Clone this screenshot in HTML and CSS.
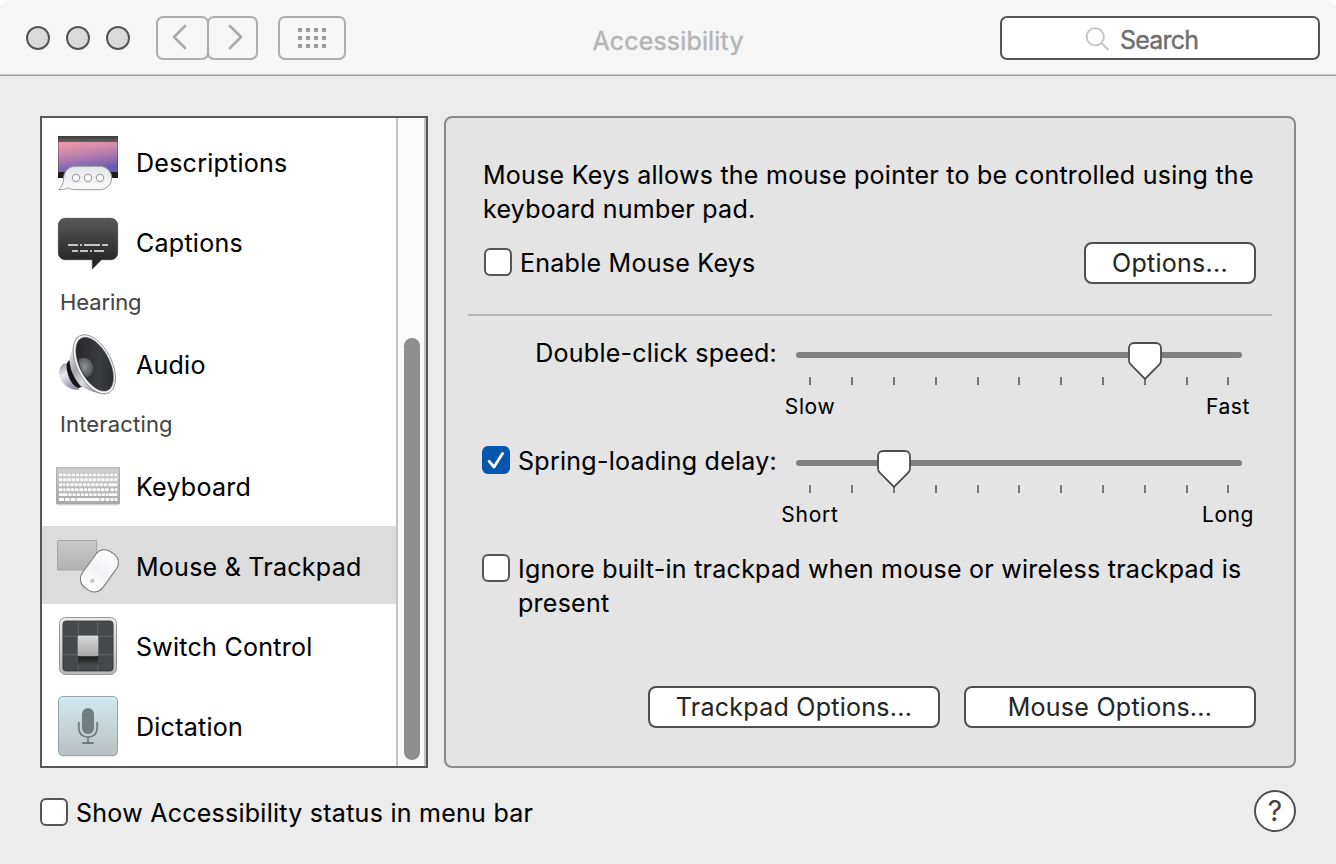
FILE: index.html
```html
<!DOCTYPE html>
<html lang="en">
<head>
<meta charset="utf-8">
<title>Accessibility</title>
<link rel="stylesheet" href="styles.css">
</head>
<body>
<div class="window">
  <header class="titlebar">
    <div class="lights"><i class="light"></i><i class="light"></i><i class="light"></i></div>
    <div class="nav">
      <button class="nav-btn nav-back" aria-label="Back"><svg width="20" height="28" viewBox="0 0 20 28"><path d="M15 3 4 14l11 11"/></svg></button>
      <button class="nav-btn nav-forward" aria-label="Forward"><svg width="20" height="28" viewBox="0 0 20 28"><path d="M5 3 16 14 5 25"/></svg></button>
    </div>
    <button class="nav-btn show-all" aria-label="Show All">
      <svg width="28" height="20" viewBox="0 0 28 20"><path d="M0 2h28M0 10h28M0 18h28"/></svg>
    </button>
    <h1 class="title">Accessibility</h1>
    <div class="search">
      <svg width="24" height="24" viewBox="0 0 24 24"><circle cx="9.300" cy="9.800" r="8.600"/><path d="M15.500 16l7 7"/></svg>
      <span>Search</span>
    </div>
  </header>

  <main class="content">
    <nav class="sidebar">
      <div class="list">
        <div class="row">
          <svg class="icon" viewBox="0 0 64 64">
            <defs>
              <linearGradient id="sky" x1="0" y1="0" x2=".3" y2="1"><stop offset="0" stop-color="#ee9aaa"/><stop offset=".3" stop-color="#d58dab"/><stop offset=".65" stop-color="#a676b0"/><stop offset="1" stop-color="#6a5cae"/></linearGradient>
              <linearGradient id="bar" x1="0" y1="0" x2="0" y2="1"><stop offset="0" stop-color="#3c3c3c"/><stop offset="1" stop-color="#626262"/></linearGradient>
              <linearGradient id="bub" x1="0" y1="0" x2="0" y2="1"><stop offset="0" stop-color="#e4e6e9"/><stop offset="1" stop-color="#fafafa"/></linearGradient>
            </defs>
            <path d="M2 6h60v42H2z" fill="#1c1c1c"/><path d="M2 6h60v6H2z" fill="url(#bar)"/><path d="M2.300 12h59.400v30H2.300z" fill="url(#sky)"/>
            <path d="M20 36.300h25.500a11.800 11.800 0 0 1 0 23.400H20c-3 0-6-.6-8-2-2.500 1.600-6 2.200-9.300 1.800C5.500 57.300 7.500 53.500 7.700 48 7.900 41 13 36.300 20 36.300z" fill="url(#bub)" stroke="#9599a0" stroke-width="1"/>
            <g fill="#fff" stroke="#a5a5a5" stroke-width="1.200"><circle cx="20" cy="48" r="3.600"/><circle cx="32" cy="48" r="3.600"/><circle cx="44" cy="48" r="3.600"/></g>
          </svg>
          <span>Descriptions</span>
        </div>
        <div class="row">
          <svg class="icon" viewBox="0 0 64 64">
            <defs><linearGradient id="cap" x1="0" y1="0" x2="0" y2="1"><stop offset="0" stop-color="#585858"/><stop offset=".8" stop-color="#292929"/><stop offset="1" stop-color="#1d1d1d"/></linearGradient></defs>
            <path d="M9 8.300h46a6.700 6.700 0 0 1 6.700 6.700v28a6.700 6.700 0 0 1-6.700 6.700h-9.500L36.300 59V49.700H9A6.700 6.700 0 0 1 2.300 43V15A6.700 6.700 0 0 1 9 8.300z" fill="url(#cap)" stroke="#333" stroke-width=".6"/>
            <path d="M12 35h10m2 0h2m2 0h16m2 0h6M16 41h6m2 0h8m2 0h2m2 0h10" stroke="#c4c4c4" stroke-width="2"/>
          </svg>
          <span>Captions</span>
        </div>
        <div class="group hearing">Hearing</div>
        <div class="row">
          <svg class="icon" viewBox="0 0 64 64">
            <defs>
              <linearGradient id="cone" x1="0" y1=".2" x2=".8" y2="1"><stop offset="0" stop-color="#eeeef2"/><stop offset=".35" stop-color="#a4a4aa"/><stop offset=".6" stop-color="#dcdce2"/><stop offset="1" stop-color="#77777d"/></linearGradient>
              <linearGradient id="back" x1="0" y1="0" x2=".5" y2="1"><stop offset="0" stop-color="#8b8b94"/><stop offset=".45" stop-color="#e9e9f2"/><stop offset="1" stop-color="#9292a0"/></linearGradient>
              <radialGradient id="ball" cx=".4" cy=".45" r=".65"><stop offset="0" stop-color="#8d9595"/><stop offset="1" stop-color="#484c4f"/></radialGradient>
              <linearGradient id="dish" x1="0" y1="0" x2="1" y2="1"><stop offset="0" stop-color="#202022"/><stop offset=".6" stop-color="#3b3c40"/><stop offset="1" stop-color="#252527"/></linearGradient>
            </defs>
            <path d="M13 31C5 30 3 36 3.300 42c.6 8 7.700 16 19.700 16z" fill="url(#back)"/>
            <path d="M14 28c-4.500 2-4 8-2 14.500 2.200 7 5.500 11.500 10.500 13.500l6-2z" fill="#161618"/>
            <path d="M20 3c-3 8-3.500 16-6.500 23 0 10 3.500 19 11 28 8 4 16 7.500 24.500 8.500z" fill="url(#cone)"/>
            <ellipse cx="38.300" cy="32.300" rx="17.300" ry="32" transform="rotate(-27 38.300 32.300)" fill="#f5f5f7" stroke="#8a8a90" stroke-width=".8"/>
            <ellipse cx="38.600" cy="32.200" rx="15" ry="29.200" transform="rotate(-27 38.600 32.200)" fill="url(#dish)" stroke="#555" stroke-width=".5"/>
            <path d="M22.500 27.500c7-4 14.500.5 14.800 8.500.1 5-3 9-7.300 9-3.500-4-6.500-10.500-7.500-17.500z" fill="url(#ball)"/>
          </svg>
          <span>Audio</span>
        </div>
        <div class="group">Interacting</div>
        <div class="row">
          <svg class="icon" viewBox="0 0 64 64">
            <defs><linearGradient id="kbd" x1="0" y1="0" x2="0" y2="1"><stop offset="0" stop-color="#d0d0d0"/><stop offset="1" stop-color="#a8a8a8"/></linearGradient></defs>
            <path d="M1 50h62v1.600H1z" fill="#ddd"/>
            <path d="M.400 13.700h63.200v36H.400z" fill="url(#kbd)" stroke="#999" stroke-width=".8"/>
            <g fill="none" stroke="#fafafa">
              <path d="M3 21h58.300" stroke-width="2.400" stroke-dasharray="3.200 1.036"/>
              <path d="M3 25.800h58.300" stroke-width="3" stroke-dasharray="3.400 .822"/>
              <path d="M3 30.800h6m1 0h45.500" stroke-width="3" stroke-dasharray="3.300 .9"/><path d="M55 30.800h6.300" stroke-width="3"/>
              <path d="M3 35.800h6.600M10.500 35.800h43M54.500 35.800h6.800" stroke-width="3" stroke-dasharray="3.500 .8"/>
              <path d="M3 40.700h8.500M52.500 40.700h8.800" stroke-width="2.800"/><path d="M12.400 40.700h39.500" stroke-width="2.800" stroke-dasharray="3.300 .85"/>
              <path d="M3 45.500h5m1 0h4.500m1 0h5m1 0h23m1 0h4m1 0h4m1 0h3m1 0h2.800" stroke-width="3"/>
            </g>
          </svg>
          <span>Keyboard</span>
        </div>
        <div class="row selected">
          <svg class="icon" viewBox="0 0 64 64">
            <defs>
              <linearGradient id="pad" x1="0" y1="0" x2="0" y2="1"><stop offset="0" stop-color="#c9c9c9"/><stop offset="1" stop-color="#b2b2b2"/></linearGradient>
              <linearGradient id="mou" x1="0" y1="0" x2="0" y2="1"><stop offset="0" stop-color="#fff"/><stop offset=".5" stop-color="#f2f2f4"/><stop offset="1" stop-color="#fff"/></linearGradient>
            </defs>
            <rect x="1.500" y="6.500" width="39.200" height="29.500" rx=".8" fill="url(#pad)" stroke="#a0a0a0" stroke-width=".9"/>
            <g transform="rotate(36 43.300 37)"><rect x="30.800" y="15.500" width="25" height="44" rx="10.500" fill="#bbb"/><rect x="30.700" y="14.700" width="25.200" height="44.200" rx="10.500" fill="url(#mou)" stroke="#7b7b7b" stroke-width="1"/></g>
            <path d="M37.300 45c1 .2 1.300 1 .8 2.300-.4 1.300-1.600 1.700-2.800 1.300-1-.4-1.200-1.400-.7-2.400.5-1 1.300-1.300 2.200-1.200z" fill="#c6c6ca" stroke="#c6c6ca" stroke-width=".5"/>
          </svg>
          <span>Mouse &amp; Trackpad</span>
        </div>
        <div class="row">
          <svg class="icon" viewBox="0 0 64 64">
            <defs>
              <linearGradient id="frm" x1="0" y1="0" x2="0" y2="1"><stop offset="0" stop-color="#ededed"/><stop offset="1" stop-color="#b9b9b9"/></linearGradient>
              <linearGradient id="sq" x1="0" y1="0" x2="0" y2="1"><stop offset="0" stop-color="#d8d8d8"/><stop offset="1" stop-color="#a9a9a9"/></linearGradient>
              <linearGradient id="shd" x1="0" y1="0" x2="0" y2="1"><stop offset="0" stop-color="#1b1b1c"/><stop offset="1" stop-color="#47484a"/></linearGradient>
            </defs>
            <rect x="3.500" y="3.500" width="57" height="57" rx="6" fill="url(#frm)" stroke="#969696"/>
            <rect x="6.900" y="6.900" width="50.200" height="50.200" rx="3" fill="#47484b" stroke="#303032" stroke-width=".7"/>
            <path d="M22.300 7v50M41.700 7v50M7 22.300h50M7 40.700h50" stroke="#6b6c6e" stroke-width=".8"/>
            <path d="M22 42h20.300v9H22z" fill="url(#shd)"/>
            <rect x="21.700" y="21.700" width="20.600" height="20.600" rx="1.300" fill="url(#sq)"/><path d="M22.500 22.300h19" stroke="#efefef" stroke-width=".8"/>
          </svg>
          <span>Switch Control</span>
        </div>
        <div class="row">
          <svg class="icon" viewBox="0 0 64 64">
            <defs><linearGradient id="dic" x1="0" y1="0" x2="0" y2="1"><stop offset="0" stop-color="#d1e9f1"/><stop offset="1" stop-color="#b9c0c1"/></linearGradient></defs>
            <rect x="2.500" y="3" width="59" height="59.500" rx="4.500" fill="#d5d5d5"/>
            <rect x="2.500" y="2.500" width="59" height="59" rx="4.500" fill="url(#dic)" stroke="#93a3a8"/>
            <rect x="26" y="14" width="12" height="26" rx="6" fill="#6f7e80"/>
            <path d="M22.800 28v6c0 5.500 3.700 9.200 9.200 9.200s9.200-3.700 9.200-9.200v-6M32 43.500V49M26.300 49h11.400" fill="none" stroke="#6f7e80" stroke-width="1.800"/>
          </svg>
          <span>Dictation</span>
        </div>
      </div>
      <div class="scroller"><div class="thumb"></div></div>
    </nav>

    <section class="panel">
      <p class="intro"><span>Mouse Keys allows the mouse pointer to be controlled using the</span><br><span>keyboard number pad.</span></p>
      <div class="enable">
        <label class="check-row"><i class="check"></i><span>Enable Mouse Keys</span></label>
        <button class="button small">Options...</button>
      </div>
      <hr class="divider">
      <div class="slider-row">
        <div class="slider-label"><span>Double-click speed:</span></div>
        <div class="slider">
          <div class="track"></div>
          <div class="ticks"><i></i><i></i><i></i><i></i><i></i><i></i><i></i><i></i><i></i><i></i><i></i></div>
          <svg class="knob knob-speed" width="34" height="38" viewBox="0 0 34 38"><path d="M6 1h22a5 5 0 0 1 5 5v12.500c0 1.800-.6 3-1.800 4.200L17 37 2.800 22.700C1.600 21.500 1 20.300 1 18.500V6a5 5 0 0 1 5-5z"/></svg>
          <div class="ends"><div>Slow</div><div>Fast</div></div>
        </div>
      </div>
      <div class="slider-row">
        <div class="slider-label check-row"><i class="check checked"><svg width="28" height="28" viewBox="0 0 28 28"><path d="M7 15.200 12 21l8.500-13.500"/></svg></i><span>Spring-loading delay:</span></div>
        <div class="slider">
          <div class="track"></div>
          <div class="ticks"><i></i><i></i><i></i><i></i><i></i><i></i><i></i><i></i><i></i><i></i><i></i></div>
          <svg class="knob knob-delay" width="34" height="38" viewBox="0 0 34 38"><path d="M6 1h22a5 5 0 0 1 5 5v12.500c0 1.800-.6 3-1.800 4.200L17 37 2.800 22.700C1.600 21.500 1 20.300 1 18.500V6a5 5 0 0 1 5-5z"/></svg>
          <div class="ends"><div class="short">Short</div><div>Long</div></div>
        </div>
      </div>
      <label class="check-row ignore"><i class="check"></i><span>Ignore built-in trackpad when mouse or wireless trackpad is<br>present</span></label>
      <div class="actions">
        <button class="button">Trackpad Options...</button>
        <button class="button">Mouse Options...</button>
      </div>
    </section>
  </main>

  <footer class="footer">
    <label class="check-row"><i class="check"></i><span>Show Accessibility status in menu bar</span></label>
    <button class="help" aria-label="Help">?</button>
  </footer>
</div>
</body>
</html>
```
FILE: styles.css
```css
* { box-sizing: border-box; }
body { margin: 0; background: #fff; font-family: Inter, "Liberation Sans", sans-serif; font-size: 25px; line-height: 34px; letter-spacing: .26px; color: #000; -webkit-text-stroke: .1px currentColor; }
button { font: inherit; letter-spacing: inherit; padding: 0; margin: 0; }
span { white-space: nowrap; }
svg { display: block; flex: none; }
.window { width: 1336px; height: 864px; background: #ececec; border-radius: 10px 10px 0 0; overflow: hidden; }

.titlebar { height: 76px; display: flex; align-items: flex-start; padding: 16px 16px 0 26px; background: #f6f6f6; border-bottom: 1px solid #a2a2a2; box-shadow: inset 0 -1px #c4c4c4, inset 0 1px #fbfbfb; }
.lights { display: flex; gap: 16px; margin: 10px 26px 0 0; }
.light { width: 24px; height: 24px; border-radius: 50%; border: 2px solid #555; background: #dadada; }
.nav { display: flex; margin-right: 20px; }
.nav-btn { height: 44px; display: flex; align-items: center; justify-content: center; border: 2px solid #acacac; border-radius: 7px; background: #f6f6f6; }
.nav-btn path { fill: none; stroke: #a9a9a9; stroke-width: 2.600; stroke-linecap: round; stroke-linejoin: round; }
.nav-back { width: 53px; padding: 0 6px 2px 0; }
.nav-forward { width: 51px; margin-left: -2px; padding: 0 0 2px 4px; }
.show-all { width: 68px; }
.show-all path { stroke: #9c9c9c; stroke-width: 4; stroke-dasharray: 4 4; stroke-linecap: butt; }
.title { flex: 1; margin: 8px 0 0; font-size: 25px; font-weight: 400; line-height: 34px; letter-spacing: .17px; color: #b4b4b4; text-align: center; padding-right: 10px; -webkit-text-stroke: .4px #b4b4b4; }
.search { width: 320px; height: 44px; display: flex; align-items: center; border: 2px solid #555; border-radius: 7px; background: #fff; padding-left: 84px; gap: 10px; color: #6e6e6e; }
.search svg { margin-top: 2px; fill: none; stroke: #c3c3c3; stroke-width: 1.800; }
.search span { padding-top: 3px; letter-spacing: -.8px; -webkit-text-stroke: .4px #6e6e6e; }

.content { display: flex; gap: 16px; padding: 40px 40px 0; height: 692px; }
.sidebar { width: 388px; height: 652px; display: flex; border: 2px solid #565658; background: #fff; }
.list { flex: 1; padding-top: 4px; }
.row { height: 78px; margin-bottom: 2px; padding: 2px 0 0 14px; display: flex; align-items: center; gap: 16px; }
.row span { padding-top: 2px; }
.selected { background: #dcdcdc; }
.icon { width: 64px; height: 64px; }
.group { height: 42px; padding-left: 18px; line-height: 40px; font-size: 22px; letter-spacing: .16px; color: #444; }
.group.hearing { letter-spacing: -.1px; }
.scroller { width: 30px; background: #fafafa; border-left: 2px solid #c3c3c3; border-right: 2px solid #c3c3c3; padding: 220px 0 0 6px; }
.thumb { width: 16px; height: 422px; border-radius: 8px; background: #8e8e8e; }

.panel { width: 852px; height: 652px; border: 2px solid #8a8a8a; border-radius: 8px; background: #e4e4e4; padding: 40px 22px 0; }
.intro { margin: 0 0 16px 15px; }
.enable { height: 42px; display: flex; align-items: center; justify-content: space-between; padding: 0 16px; }
.check-row { display: flex; align-items: center; gap: 8px; }
.check { width: 28px; height: 28px; flex: none; margin-bottom: 2px; border: 2px solid #555; border-radius: 6px; background: #fff; }
.check.checked { border: 0; background: #0656ad; }
.checked path { fill: none; stroke: #fff; stroke-width: 2.800; stroke-linecap: round; stroke-linejoin: round; }
.button { width: 292px; height: 42px; border: 2px solid #4f4f4f; border-radius: 8px; background: #fff; color: #262626; line-height: 38px; text-align: center; }
.button.small { width: 172px; }
.divider { height: 2px; margin: 30px 0 20px; border: 0; background: #b5b5b5; }
.slider-row { height: 108px; display: flex; justify-content: flex-end; padding-right: 14px; gap: 19px; }
.slider-label { height: 34px; white-space: nowrap; }
.slider { position: relative; width: 462px; height: 100px; padding-top: 16px; }
.track { width: 446px; height: 6px; border-radius: 3px; background: #808080; }
.ticks { display: flex; gap: 40px; margin: 19px 0 0 13px; }
.ticks i { flex: none; width: 2px; height: 8px; background: #777; }
.ticks i:nth-child(6), .ticks i:last-child { margin-left: -1px; }
.knob { position: absolute; top: 6px; fill: #fff; stroke: #4c4c4c; stroke-width: 1.800; }
.knob-speed { left: 332px; }
.knob-delay { left: 81px; }
.ends { display: flex; justify-content: space-between; width: 518px; margin: 6px 0 0 -36px; font-size: 21px; line-height: 32px; letter-spacing: .6px; }
.ends div { width: 100px; text-align: center; }
.ends .short { letter-spacing: .8px; }
.ignore { align-items: flex-start; margin-left: 14px; }
.ignore .check { margin-top: 2px; }
.actions { display: flex; justify-content: flex-end; gap: 24px; margin: 66px 16px 0 0; }
.footer { display: flex; align-items: center; justify-content: space-between; height: 42px; margin: 22px 40px 0; }
.footer .check-row { padding-top: 4px; }
.help { width: 42px; height: 42px; border: 2px solid #4f4f4f; border-radius: 50%; background: #fff; color: #444; font-size: 28px; line-height: 38px; letter-spacing: 0; text-align: center; }
```
